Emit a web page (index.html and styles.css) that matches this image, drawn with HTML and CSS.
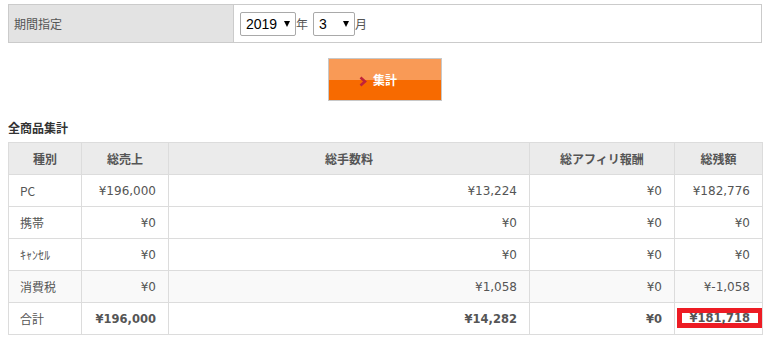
FILE: index.html
```html
<!DOCTYPE html>
<html lang="ja">
<head>
<meta charset="utf-8">
<link rel="stylesheet" href="styles.css">
</head>
<body>
<div class="page">
  <table class="period">
    <tr>
      <th class="period-label">期間指定</th>
      <td class="period-field">
        <span class="sel sel-year"><select><option>2019</option></select></span><span class="unit">年</span><span class="sel sel-month"><select><option>3</option></select></span><span class="unit">月</span>
      </td>
    </tr>
  </table>

  <div class="actions">
    <button class="btn-sum" type="button">
      <svg class="chev" width="8" height="11" viewBox="0 0 8 11"><polyline points="1.5,1.5 6,5.5 1.5,9.5" fill="none" stroke="#c0233a" stroke-width="2.6"/></svg>
      <span class="btn-text">集計</span>
    </button>
  </div>

  <h2 class="section-title">全商品集計</h2>
  <table class="summary">
    <colgroup>
      <col class="c1"><col class="c2"><col class="c3"><col class="c4"><col class="c5">
    </colgroup>
    <thead>
      <tr><th>種別</th><th>総売上</th><th>総手数料</th><th>総アフィリ報酬</th><th>総残額</th></tr>
    </thead>
    <tbody>
      <tr><td class="kind">PC</td><td>¥196,000</td><td>¥13,224</td><td>¥0</td><td>¥182,776</td></tr>
      <tr><td class="kind">携帯</td><td>¥0</td><td>¥0</td><td>¥0</td><td>¥0</td></tr>
      <tr><td class="kind">ｷｬﾝｾﾙ</td><td>¥0</td><td>¥0</td><td>¥0</td><td>¥0</td></tr>
      <tr class="alt"><td class="kind">消費税</td><td>¥0</td><td>¥1,058</td><td>¥0</td><td>¥-1,058</td></tr>
      <tr class="total"><td class="kind">合計</td><td>¥196,000</td><td>¥14,282</td><td>¥0</td><td class="marked"><span class="mark">¥181,718</span></td></tr>
    </tbody>
  </table>
</div>
</body>
</html>
```

FILE: styles.css
```css
* { box-sizing: border-box; }
html, body { margin: 0; padding: 0; background: #fff; }
body {
  font-family: "Noto Sans CJK JP", "DejaVu Sans", sans-serif;
  font-size: 12px;
  color: #555;
}
.page { padding: 4px 20px 0 8px; width: 782px; }

.period {
  width: 754px;
  border-collapse: collapse;
  border: 1px solid #cbcbcb;
}
.period-label {
  width: 225px;
  background: #e3e3e3;
  border-right: 1px solid #cbcbcb;
  text-align: left;
  font-weight: normal;
  padding: 0 0 0 5px;
  height: 38px;
  color: #555;
}
.period-field { padding: 0 0 0 6px; }
.sel { position: relative; display: inline-block; vertical-align: middle; }
.sel select {
  appearance: none;
  -webkit-appearance: none;
  font-family: "Liberation Sans", Arial, sans-serif;
  font-size: 14px;
  color: #000;
  background: #fff;
  border: 1px solid #a9a9a9;
  border-radius: 2px;
  height: 24px;
  padding: 0 0 0 5px;
  margin: 0;
  display: block;
}
.sel-year select { width: 56px; }
.sel-month select { width: 42px; padding-left: 5px; }
.sel::after {
  content: "";
  position: absolute;
  right: 6px;
  top: 9px;
  border-left: 3.5px solid transparent;
  border-right: 3.5px solid transparent;
  border-top: 6px solid #000;
  pointer-events: none;
}
.unit { display: inline-block; vertical-align: middle; color: #555; font-size: 12px; }
.sel-year + .unit { margin-right: 5px; }

.actions { display: flex; justify-content: center; padding: 15px 0 0; width: 754px; }
.btn-sum {
  width: 114px;
  height: 43px;
  border: 1px solid #c8c8c8;
  background: linear-gradient(#f99a56 0, #f99a56 50%, #f76a00 50%, #f76a00 100%);
  display: flex;
  align-items: center;
  justify-content: center;
  padding: 0 14px 0 0;
  margin: 0;
  cursor: pointer;
  font-family: "Noto Sans CJK JP", sans-serif;
}
.chev { margin-right: 6px; margin-top: 3px; }
.btn-text { color: #fff; font-weight: bold; font-size: 12px; }

.section-title {
  margin: 0;
  padding: 20px 0 0;
  font-size: 12px;
  font-weight: bold;
  color: #333;
  line-height: 14px;
}

.summary {
  margin-top: 7px;
  width: 754px;
  table-layout: fixed;
  border-collapse: collapse;
}
.c1 { width: 73px; }
.c2 { width: 87px; }
.c3 { width: 361px; }
.c4 { width: 145px; }
.c5 { width: 88px; }
.summary th, .summary td {
  border: 1px solid #dcdcdc;
  height: 32px;
  padding: 0 12px;
  color: #555;
}
.summary th { background: #ebebeb; font-weight: bold; text-align: center; }
.summary td { text-align: right; font-family: "DejaVu Sans", "Noto Sans CJK JP", sans-serif; }
.summary td.kind { text-align: left; padding-left: 11px; font-family: "Noto Sans CJK JP", sans-serif; }
.summary tr.alt td { background: #f9f9f9; }
.summary tr.total td { font-weight: bold; font-size: 11.5px; }
.summary tr.total td.kind { font-weight: normal; font-size: 12px; }
.summary td.marked { padding: 0 0 2px 2px; }
.mark {
  display: block;
  height: 20px;
  line-height: 10px;
  border: 5px solid #ed1c24;
  padding-right: 8px;
  margin-right: -1px;
  text-align: right;
  white-space: nowrap;
}
```
